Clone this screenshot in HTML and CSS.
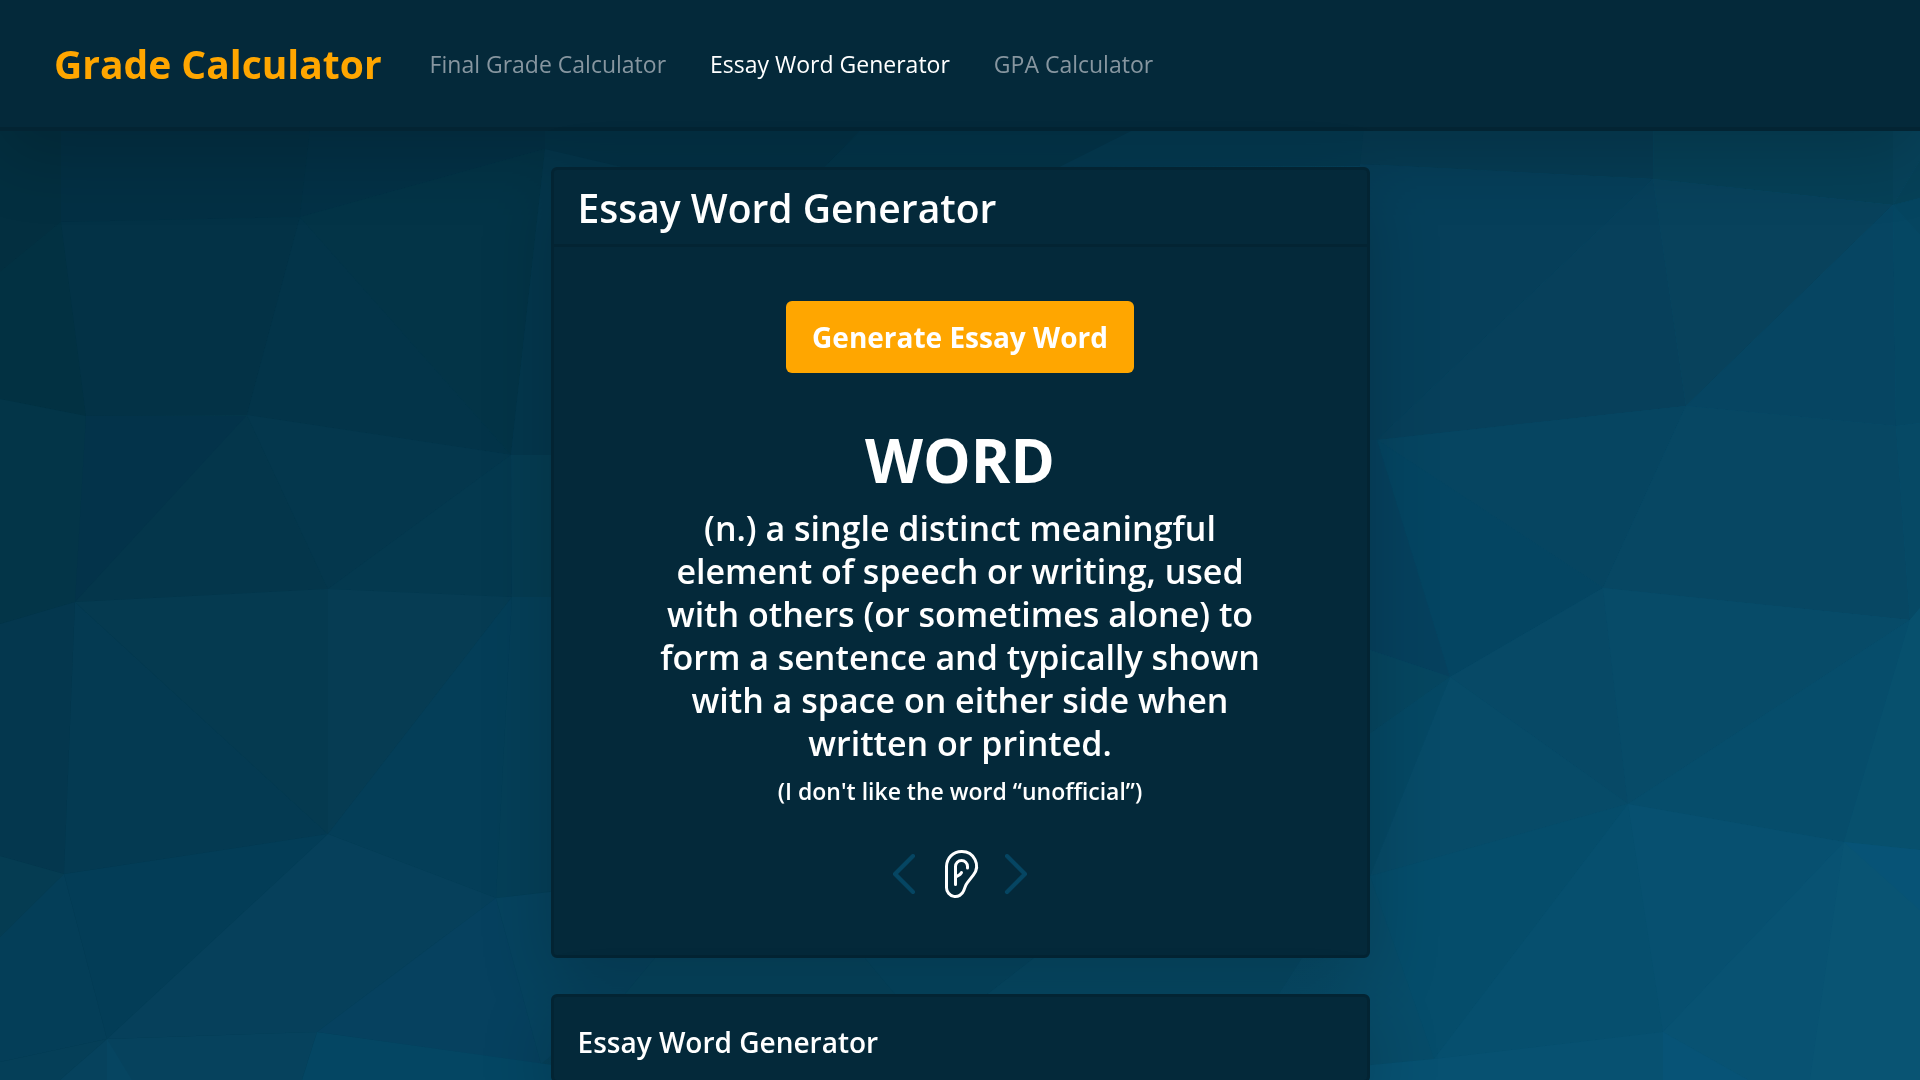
FILE: index.html
```html
<!DOCTYPE html>
<html lang="en">
<head>
  <meta charset="utf-8">
  <meta name="viewport" content="width=device-width, initial-scale=1">
  <title>Essay Word Generator</title>
  <link rel="stylesheet" href="styles.css">
</head>
<body>
  <svg class="backdrop" viewBox="0 0 1920 1080" preserveAspectRatio="none" aria-hidden="true">
    <defs>
      <linearGradient id="base" x1="0" y1="0" x2="1920" y2="1080" gradientUnits="userSpaceOnUse">
        <stop offset="0" stop-color="#03303f"/>
        <stop offset="0.5" stop-color="#05425c"/>
        <stop offset="1" stop-color="#095777"/>
      </linearGradient>
    </defs>
    <rect width="1920" height="1080" fill="url(#base)"/>
    <g>
      <path fill="#032f40" d="M0 0H61V222L0 272z"/>
      <path fill="#033044" d="M61 0H310V131L300 217L61 222z"/>
      <path fill="#033146" d="M310 0H551V149H545L300 217L310 131z"/>
      <path fill="#023142" d="M0 272L61 222L86 416L0 399z"/>
      <path fill="#033246" d="M61 222L300 217L247 415L86 416z"/>
      <path fill="#033449" d="M300 217L511 455L247 415z"/>
      <path fill="#033447" d="M300 217L545 149L511 455z"/>
      <path fill="#04374d" d="M545 149H640V455H511z"/>
      <path fill="#033548" d="M0 399L86 416L80 595L75 602L0 624z"/>
      <path fill="#03334a" d="M86 416H247L75 602z"/>
      <path fill="#04364b" d="M247 415L328 589L75 602z"/>
      <path fill="#04374d" d="M247 415L511 455L328 589z"/>
      <path fill="#04394f" d="M511 455L512 597L328 589z"/>
      <path fill="#053c52" d="M511 455H640V600L512 597z"/>
      <path fill="#04374e" d="M0 624L75 602L64 874L0 856z"/>
      <path fill="#043a52" d="M75 602L328 834L64 874z"/>
      <path fill="#053a50" d="M75 602L328 589V834z"/>
      <path fill="#063c53" d="M328 589L512 597L328 834z"/>
      <path fill="#043e58" d="M512 597L496 898L328 834z"/>
      <path fill="#053f58" d="M512 597H640V880L496 898z"/>
      <path fill="#053c52" d="M0 856L64 874L0 937z"/>
      <path fill="#043e58" d="M64 874L107 1039L0 1062V937z"/>
      <path fill="#033d57" d="M64 874L328 834L107 1039z"/>
      <path fill="#06405b" d="M328 834L496 898L317 1032L107 1039z"/>
      <path fill="#06415f" d="M496 898L541 1064L317 1032z"/>
      <path fill="#06435f" d="M496 898L655 880V958L620 1000L541 1064z"/>
      <path fill="#053f58" d="M0 1062L107 1039L60 1080H0z"/>
      <path fill="#06425d" d="M107 1039L317 1032L302 1080H60z"/>
      <path fill="#064561" d="M107 1039L132 1080H107z"/>
      <path fill="#044663" d="M317 1032L560 1066V1080H302z"/>
      <path fill="#033348" d="M545 0H900L860 131L825 167H622L545 149z"/>
      <path fill="#03364c" d="M900 0H1200L1132 131L1060 167H825L860 131z"/>
      <path fill="#043b53" d="M1200 0H1377V166L1060 167L1132 131z"/>
      <path fill="#06455f" d="M655 880H865V958L900 1000H620L655 958z"/>
      <path fill="#054661" d="M865 880H1034V958L980 1000H900L865 958z"/>
      <path fill="#064965" d="M1034 880H1302V958L1275 1000H980L1034 958z"/>
      <path fill="#063c54" d="M1377 0H1655L1653 179L1360 164z"/>
      <path fill="#064057" d="M1655 0H1893V205L1653 179z"/>
      <path fill="#07425a" d="M1893 0H1920V160L1893 205z"/>
      <path fill="#063f5a" d="M1360 164L1653 179L1377 440H1340z"/>
      <path fill="#07405b" d="M1653 179L1686 406L1377 440z"/>
      <path fill="#08425c" d="M1653 179L1893 205L1686 406z"/>
      <path fill="#064562" d="M1893 205L1896 426L1686 406z"/>
      <path fill="#054763" d="M1893 205L1920 235V423L1896 426z"/>
      <path fill="#054560" d="M1893 205L1920 198V235z"/>
      <path fill="#064158" d="M1893 205L1920 160V198z"/>
      <path fill="#064561" d="M1377 440L1686 406L1603 588z"/>
      <path fill="#044562" d="M1377 440L1603 588L1450 677z"/>
      <path fill="#06415e" d="M1377 440L1450 677L1340 640V440z"/>
      <path fill="#064660" d="M1340 640L1450 677L1340 755z"/>
      <path fill="#074763" d="M1686 406L1896 426L1910 620L1603 588z"/>
      <path fill="#064965" d="M1896 426L1920 423V608L1910 620z"/>
      <path fill="#074966" d="M1450 677L1603 588L1628 804z"/>
      <path fill="#074b68" d="M1603 588L1910 620L1628 804z"/>
      <path fill="#064d6b" d="M1910 620L1844 842L1628 804z"/>
      <path fill="#07506d" d="M1910 620L1920 608V850L1844 842z"/>
      <path fill="#074b68" d="M1450 677L1628 804L1370 876z"/>
      <path fill="#054864" d="M1450 677L1370 876H1340V755z"/>
      <path fill="#054d6b" d="M1370 876L1628 804L1434 1059z"/>
      <path fill="#074c69" d="M1340 876H1370L1434 1059L1340 1068z"/>
      <path fill="#064f6e" d="M1628 804L1663 1032L1434 1059z"/>
      <path fill="#075070" d="M1628 804L1844 842L1663 1032z"/>
      <path fill="#085272" d="M1844 842L1810 1080H1748L1663 1032z"/>
      <path fill="#095473" d="M1844 842L1920 910V1080H1810z"/>
      <path fill="#075376" d="M1844 842L1920 850V910z"/>
      <path fill="#075171" d="M1340 1068L1434 1059L1663 1032V1080H1340z"/>
      <path fill="#075376" d="M1663 1032L1748 1080H1663z"/>
    </g>
  </svg>

  <header class="navbar">
    <a class="brand" href="#">Grade Calculator</a>
    <nav class="nav-links" aria-label="Main">
      <a class="nav-link" href="#">Final Grade Calculator</a>
      <a class="nav-link active" href="#" aria-current="page">Essay Word Generator</a>
      <a class="nav-link" href="#">GPA Calculator</a>
    </nav>
  </header>

  <main class="content">
    <section class="card">
      <h1 class="card-header">Essay Word Generator</h1>
      <div class="card-body">
        <button class="generate" type="button">Generate Essay Word</button>
        <h2 class="word">WORD</h2>
        <p class="definition">(n.) a single distinct meaningful element of speech or writing, used with others (or sometimes alone) to form a sentence and typically shown with a space on either side when written or printed.</p>
        <p class="note">(I don't like the word “unofficial”)</p>
        <div class="controls">
          <button class="icon-button muted" type="button" aria-label="Previous word">
            <svg class="icon" viewBox="0 0 16 16"><path d="M11.354 1.646a.5.5 0 0 1 0 .708L5.707 8l5.647 5.646a.5.5 0 0 1-.708.708l-6-6a.5.5 0 0 1 0-.708l6-6a.5.5 0 0 1 .708 0z"/></svg>
          </button>
          <button class="icon-button" type="button" aria-label="Listen">
            <svg class="icon" viewBox="0 0 16 16"><path d="M8.5 1A4.5 4.5 0 0 0 4 5.5v7.047a2.453 2.453 0 0 0 4.75.861l.512-1.363a5.6 5.6 0 0 1 .816-1.46l2.008-2.581A4.34 4.34 0 0 0 8.66 1zM3 5.5A5.5 5.5 0 0 1 8.5 0h.16a5.34 5.34 0 0 1 4.215 8.618l-2.008 2.581a4.6 4.6 0 0 0-.67 1.197l-.51 1.363A3.453 3.453 0 0 1 3 12.547zM8.5 4A1.5 1.5 0 0 0 7 5.5v2.695q.168-.09.332-.192c.327-.208.577-.44.72-.727a.5.5 0 1 1 .895.448c-.256.513-.673.865-1.079 1.123A9 9 0 0 1 7 9.313V11.5a.5.5 0 0 1-1 0v-6a2.5 2.5 0 0 1 5 0V6a.5.5 0 0 1-1 0v-.5A1.5 1.5 0 0 0 8.5 4"/></svg>
          </button>
          <button class="icon-button muted" type="button" aria-label="Next word">
            <svg class="icon" viewBox="0 0 16 16"><path d="M4.646 1.646a.5.5 0 0 1 .708 0l6 6a.5.5 0 0 1 0 .708l-6 6a.5.5 0 0 1-.708-.708L10.293 8 4.646 2.354a.5.5 0 0 1 0-.708z"/></svg>
          </button>
        </div>
      </div>
    </section>

    <section class="card about">
      <h2 class="about-title">Essay Word Generator</h2>
    </section>
  </main>
</body>
</html>
```
FILE: styles.css
```css
:root {
  --panel: #04293a;
  --edge: #032433;
  --accent: #ffa600;
  --muted: #064663;
  --shadow: 0 24px 72px rgba(0, 0, 0, 0.18);
}

* {
  box-sizing: border-box;
}

body {
  margin: 0;
  color: #fff;
  background: #053c52;
  font-family: "Segoe UI", "Open Sans", "Noto Sans", sans-serif;
}

h1,
h2,
p {
  margin: 0;
}

.backdrop {
  position: fixed;
  inset: 0;
  z-index: -1;
  width: 100%;
  height: 100%;
}

.navbar {
  display: flex;
  align-items: center;
  gap: 48px;
  padding: 34px 54px;
  background: var(--panel);
  border-bottom: 4px solid var(--edge);
  box-shadow: var(--shadow);
}

.brand {
  color: var(--accent);
  font-size: 39px;
  font-weight: 700;
  line-height: 59px;
  text-decoration: none;
}

.nav-links {
  display: flex;
  gap: 44px;
}

.nav-link {
  color: #8796a0;
  font-size: 23px;
  line-height: 36px;
  text-decoration: none;
}

.nav-link.active {
  color: #fff;
}

.content {
  display: flex;
  flex-direction: column;
  align-items: center;
  gap: 36px;
  padding: 36px 24px 0;
}

.card {
  width: 100%;
  max-width: 819px;
  background: var(--panel);
  border: 3px solid var(--edge);
  border-radius: 6px;
  box-shadow: var(--shadow);
}

.card-header {
  padding: 13px 24px 11px;
  border-bottom: 3px solid var(--edge);
  font-size: 39px;
  font-weight: 600;
  line-height: 50px;
}

.card-body {
  display: flex;
  flex-direction: column;
  align-items: center;
  padding: 54px 96px 57px;
  text-align: center;
}

.generate {
  height: 72px;
  padding: 0 26px;
  color: #fff;
  background: var(--accent);
  border: 0;
  border-radius: 6px;
  font: inherit;
  font-size: 28px;
  font-weight: 700;
}

.word {
  margin-top: 47px;
  font-size: 60px;
  font-weight: 700;
  line-height: 80px;
}

.definition {
  max-width: 620px;
  margin-top: 7px;
  font-size: 34px;
  font-weight: 600;
  line-height: 43px;
}

.note {
  margin-top: 12px;
  font-size: 23px;
  font-weight: 600;
  line-height: 29px;
}

.controls {
  display: flex;
  gap: 8px;
  margin-top: 44px;
}

.icon-button {
  padding: 0;
  color: #fff;
  background: none;
  border: 0;
}

.icon-button.muted {
  color: var(--muted);
}

.icon {
  display: block;
  width: 48px;
  height: 48px;
  overflow: visible;
  fill: currentColor;
}

.icon-button.muted .icon {
  stroke: currentColor;
  stroke-width: 0.4;
}

.about {
  padding: 25px 24px 18px;
}

.about-title {
  font-size: 28px;
  font-weight: 600;
  line-height: 40px;
}
```
